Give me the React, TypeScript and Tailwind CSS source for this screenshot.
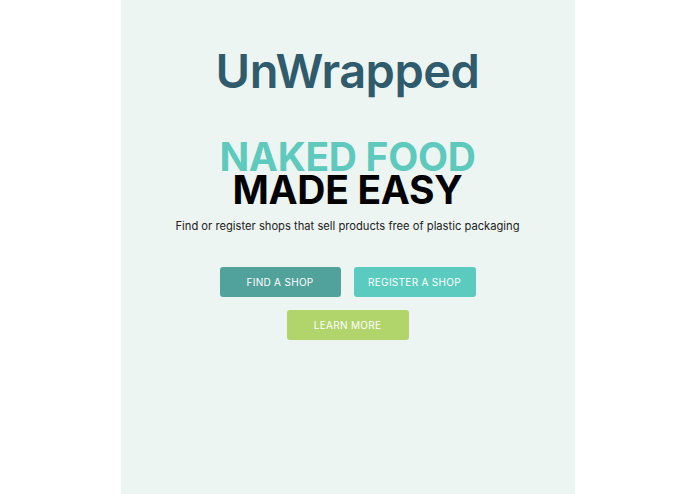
export default function App() {
  return (
    <div className="min-h-screen bg-white flex justify-center" style={{ fontFamily: "Inter, 'Noto Sans', sans-serif" }}>
      <main className="w-[454px] min-h-[494px] bg-[#edf5f3] flex flex-col items-center pt-[42px]">
        <h1 className="text-[47px] leading-[58px] font-semibold text-[#2f5b6d] tracking-[-0.5px]">UnWrapped</h1>
        <h2 className="mt-[40px] text-[39px] leading-[33px] font-bold text-center tracking-[-0.3px]">
          <span className="block text-[#5dcabd]">NAKED FOOD</span>
          <span className="block text-black">MADE EASY</span>
        </h2>
        <p className="mt-[12px] text-[11.2px] leading-[16px] text-[#222]">Find or register shops that sell products free of plastic packaging</p>
        <div className="mt-[33px] flex gap-[13px]">
          <button className="w-[121px] h-[30px] rounded-[3px] bg-[#52a29c] text-white text-[10px] tracking-[0.3px]">FIND A SHOP</button>
          <button className="w-[122px] h-[30px] rounded-[3px] bg-[#5ccbbf] text-white text-[10px] tracking-[0.3px]">REGISTER A SHOP</button>
        </div>
        <button className="mt-[13px] w-[122px] h-[30px] rounded-[3px] bg-[#b1d46b] text-white text-[10px] tracking-[0.3px]">LEARN MORE</button>
      </main>
    </div>
  );
}
